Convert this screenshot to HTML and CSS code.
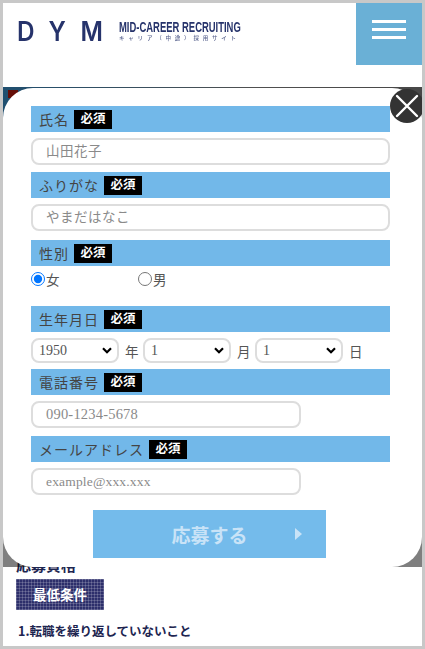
FILE: index.html
```html
<!DOCTYPE html>
<html lang="ja">
<head>
  <meta charset="UTF-8">
  <title>DYM キャリア（中途）採用サイト</title>
  <link rel="stylesheet" href="styles.css">
</head>
<body>
  <div class="frame">
    <header class="header">
      <div class="logo">
        <div class="logo-mark">DYM</div>
        <div class="logo-text">
          <div class="logo-en">MID-CAREER RECRUITING</div>
          <div class="logo-ja">キャリア（中途）採用サイト</div>
        </div>
      </div>
      <button class="menu-button" type="button" aria-label="メニュー">
        <span></span><span></span><span></span>
      </button>
    </header>

    <main class="page">
      <div class="hero"></div>
      <div class="content">
        <h2 class="section-title">応募資格</h2>
        <p class="tag">最低条件</p>
        <p class="condition">1.転職を繰り返していないこと</p>
        <p class="condition-note">短期間での転職を繰り返していない方を歓迎します</p>
      </div>
    </main>

    <div class="overlay">
      <form class="modal">
        <button class="close-button" type="button" aria-label="閉じる">
          <svg viewBox="0 0 34 34" width="34" height="34">
            <path d="M7 7 L27 27 M27 7 L7 27" stroke="#fff" stroke-width="2.4" fill="none" stroke-linecap="round"/>
          </svg>
        </button>

        <div class="field field-name">
          <div class="field-label">氏名<span class="required">必須</span></div>
          <input class="text-input" type="text" placeholder="山田花子">
        </div>
        <div class="field field-kana">
          <div class="field-label">ふりがな<span class="required">必須</span></div>
          <input class="text-input" type="text" placeholder="やまだはなこ">
        </div>
        <div class="field field-gender">
          <div class="field-label">性別<span class="required">必須</span></div>
          <div class="radio-row">
            <label class="radio"><input type="radio" name="gender" checked>女</label>
            <label class="radio"><input type="radio" name="gender">男</label>
          </div>
        </div>
        <div class="field field-birth">
          <div class="field-label">生年月日<span class="required">必須</span></div>
          <div class="select-row">
            <select class="date-select"><option>1950</option></select><span>年</span>
            <select class="date-select"><option>1</option></select><span>月</span>
            <select class="date-select"><option>1</option></select><span>日</span>
          </div>
        </div>
        <div class="field">
          <div class="field-label">電話番号<span class="required">必須</span></div>
          <input class="text-input short tel" type="text" placeholder="090-1234-5678">
        </div>
        <div class="field">
          <div class="field-label">メールアドレス<span class="required">必須</span></div>
          <input class="text-input short mail" type="text" placeholder="example@xxx.xxx">
        </div>

        <button class="submit-button" type="button">応募する</button>
      </form>
    </div>
  </div>
</body>
</html>
```

FILE: styles.css
```css
* {
  box-sizing: border-box;
}

body {
  margin: 0;
  font-family: "Liberation Serif", "Noto Sans CJK JP", serif;
  color: #555;
}

.frame {
  position: relative;
  width: 425px;
  height: 649px;
  overflow: hidden;
  background: #fff;
  border: 3px solid #c8c8c8;
}

/* header */
.header {
  display: flex;
  justify-content: space-between;
  align-items: flex-start;
  height: 84px;
}

.logo {
  display: flex;
  align-items: flex-start;
  gap: 17px;
  padding: 16px 0 0 14px;
  color: #26336b;
  filter: blur(0.4px);
}

.logo-mark {
  width: 85px;
  font-family: "Inter", "Liberation Sans", sans-serif;
  font-size: 27px;
  line-height: 26px;
  font-weight: 600;
  letter-spacing: 16.5px;
  white-space: nowrap;
  transform: scaleX(0.9);
  transform-origin: left;
}

.logo-text {
  width: 123px;
  padding-top: 1px;
}

.logo-en {
  font-family: "Liberation Sans", sans-serif;
  font-size: 15px;
  line-height: 13px;
  font-weight: 700;
  white-space: nowrap;
  transform: scaleX(0.63);
  transform-origin: left;
}

.logo-ja {
  margin-top: 1px;
  font-family: "Noto Sans CJK JP", sans-serif;
  font-size: 5.5px;
  font-weight: 500;
  line-height: 8px;
  letter-spacing: 3.8px;
  white-space: nowrap;
  color: #5a648f;
}

.menu-button {
  display: flex;
  flex-direction: column;
  align-items: center;
  gap: 5px;
  width: 66px;
  height: 62px;
  padding: 17px 0 0;
  border: none;
  background: #6ab0d6;
}

.menu-button span {
  width: 34px;
  height: 3px;
  background: #fff;
}

/* page behind the modal */
.hero {
  height: 440px;
  background:
    linear-gradient(#c81c10, #c81c10) 5px 3px / 10px 8px no-repeat,
    linear-gradient(to right, #3f9fe0, #a0a0a0 60%, #909090);
}

.content {
  padding: 28px 13px 0;
  color: #1d2550;
  font-family: "Noto Sans CJK JP", sans-serif;
  font-weight: 700;
}

.section-title {
  margin: 0;
  font-size: 15px;
  line-height: 20px;
}

.tag {
  width: 88px;
  height: 31px;
  margin: 4px 0 0;
  color: #fff;
  font-size: 13.5px;
  line-height: 31px;
  text-align: center;
  background-color: #2d2f6b;
  background-image:
    repeating-linear-gradient(to right, rgba(255, 255, 255, 0.18) 0 1px, transparent 1px 3px),
    repeating-linear-gradient(to bottom, rgba(255, 255, 255, 0.18) 0 1px, transparent 1px 3px);
}

.condition {
  margin: 11px 0 0 2px;
  font-size: 12.5px;
  line-height: 20px;
}

.condition-note {
  margin: 3px 0 0 2px;
  font-size: 12.5px;
  font-weight: 400;
  line-height: 20px;
}

/* modal */
.overlay {
  position: absolute;
  top: 84px;
  left: 0;
  right: 0;
  height: 480px;
  padding-top: 1px;
  background: rgba(0, 0, 0, 0.5);
}

.modal {
  position: relative;
  height: 479px;
  padding: 18px 32px 0 28px;
  background: #fff;
  border-radius: 30px;
}

.close-button {
  position: absolute;
  top: 1px;
  right: -2px;
  width: 34px;
  height: 34px;
  padding: 0;
  border: none;
  border-radius: 50%;
  background: #333;
}

.close-button svg {
  display: block;
}

.field {
  margin-bottom: 8px;
}

.field-name {
  margin-bottom: 7px;
}

.field-kana {
  margin-bottom: 9px;
}

.field-gender {
  margin-bottom: 0;
}

.field-birth {
  margin-bottom: 6px;
}

.field-label {
  display: flex;
  align-items: center;
  height: 26px;
  margin-bottom: 6px;
  padding-left: 8px;
  font-size: 14px;
  letter-spacing: 1px;
  color: #444;
  background: #72b8e9;
}

.required {
  width: 38px;
  height: 19px;
  margin-left: 5px;
  color: #fff;
  font-size: 12.5px;
  font-weight: 700;
  line-height: 19px;
  letter-spacing: 0;
  text-align: center;
  background: #000;
}

.text-input {
  display: block;
  width: 100%;
  height: 27px;
  padding: 0 13px;
  border: 2px solid #ddd;
  border-radius: 8px;
  font-family: inherit;
  font-size: 13.5px;
  letter-spacing: 0.5px;
  background: #fff;
}

.text-input::placeholder {
  color: #8a8a8a;
  opacity: 1;
}

.text-input.short {
  width: 270px;
}

.text-input.tel {
  font-size: 14.5px;
  letter-spacing: 0.2px;
}

.text-input.mail {
  letter-spacing: 0.17px;
}

.radio-row {
  display: flex;
  height: 35px;
  margin-top: -1px;
  font-size: 13.5px;
}

.radio {
  display: flex;
  align-items: center;
  align-self: flex-start;
  width: 107px;
  height: 15px;
}

.radio input {
  width: 14px;
  height: 14px;
  margin: 0 1px 0 0;
}

.select-row {
  display: flex;
  align-items: center;
  gap: 6px;
  font-size: 13.5px;
}

.select-row span {
  width: 12px;
}

.date-select {
  width: 88px;
  height: 25px;
  padding: 0 0 0 6px;
  border: 2px solid #ddd;
  border-radius: 8px;
  font-family: inherit;
  font-size: 14px;
  color: #555;
  appearance: none;
  background: #fff url("data:image/svg+xml,%3Csvg xmlns='http://www.w3.org/2000/svg' width='10' height='7'%3E%3Cpath d='M1 1.2 L5 5.2 L9 1.2' fill='none' stroke='%23000' stroke-width='2.2'/%3E%3C/svg%3E") no-repeat right 5px center;
}

.submit-button {
  position: relative;
  display: block;
  width: 233px;
  height: 48px;
  margin: 15px auto 0;
  padding: 0;
  border: none;
  font-family: "Noto Sans CJK JP", sans-serif;
  font-size: 19px;
  font-weight: 700;
  color: #c9e3f7;
  background: #74bbeb;
  transform: translateX(-1px);
}

.submit-button::after {
  content: "";
  position: absolute;
  top: 18px;
  right: 24px;
  border-left: 7px solid #c9e3f7;
  border-top: 6px solid transparent;
  border-bottom: 6px solid transparent;
}
```
